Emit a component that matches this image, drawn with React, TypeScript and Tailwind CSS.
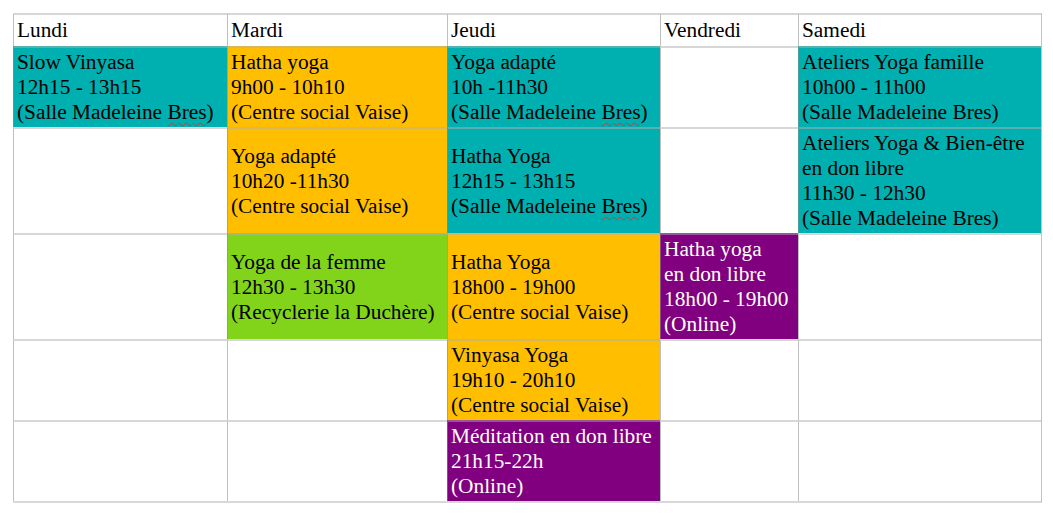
import React from "react";

type Tone = "white" | "teal" | "gold" | "lime" | "purple";

interface Cell {
  tone: Tone;
  lines: React.ReactNode[];
}

const toneClass: Record<Tone, string> = {
  white: "bg-white text-black",
  teal: "bg-[#00afaf] text-black",
  gold: "bg-[#ffbf00] text-black",
  lime: "bg-[#81d41a] text-black",
  purple: "bg-[#800080] text-white",
};

// spell-check squiggle under "Bres"
const Bres = () => (
  <span className="underline decoration-wavy decoration-[#e03030] decoration-1 underline-offset-[3px]">Bres</span>
);

const empty: Cell = { tone: "white", lines: [] };

const header: Cell[] = ["Lundi", "Mardi", "Jeudi", "Vendredi", "Samedi"].map((d) => ({ tone: "white", lines: [d] }));

const rows: Cell[][] = [
  [
    { tone: "teal", lines: ["Slow Vinyasa", "12h15 - 13h15", <>(Salle Madeleine <Bres />)</>] },
    { tone: "gold", lines: ["Hatha yoga", "9h00 - 10h10", "(Centre social Vaise)"] },
    { tone: "teal", lines: ["Yoga adapté", "10h -11h30", <>(Salle Madeleine <Bres />)</>] },
    empty,
    { tone: "teal", lines: ["Ateliers Yoga famille", "10h00 - 11h00", "(Salle Madeleine Bres)"] },
  ],
  [
    empty,
    { tone: "gold", lines: ["Yoga adapté", "10h20 -11h30", "(Centre social Vaise)"] },
    { tone: "teal", lines: ["Hatha Yoga", "12h15 - 13h15", <>(Salle Madeleine <Bres />)</>] },
    empty,
    {
      tone: "teal",
      lines: ["Ateliers Yoga & Bien-être", "en don libre", "11h30 - 12h30", "(Salle Madeleine Bres)"],
    },
  ],
  [
    empty,
    { tone: "lime", lines: ["Yoga de la femme", "12h30 - 13h30", "(Recyclerie la Duchère)"] },
    { tone: "gold", lines: ["Hatha Yoga", "18h00 - 19h00", "(Centre social Vaise)"] },
    { tone: "purple", lines: ["Hatha yoga", "en don libre", "18h00 - 19h00", "(Online)"] },
    empty,
  ],
  [
    empty,
    empty,
    { tone: "gold", lines: ["Vinyasa Yoga", "19h10 - 20h10", "(Centre social Vaise)"] },
    empty,
    empty,
  ],
  [
    empty,
    empty,
    { tone: "purple", lines: ["Méditation en don libre", "21h15-22h", "(Online)"] },
    empty,
    empty,
  ],
];

function TableCell({ cell }: { cell: Cell }) {
  return (
    <div
      className={`flex flex-col justify-center overflow-hidden whitespace-nowrap border-t-2 border-l border-t-[rgba(175,175,175,0.5)] border-l-[rgba(140,140,140,0.55)] pl-[3px] ${
        toneClass[cell.tone]
      }`}
    >
      {cell.lines.map((l, i) => (
        <div key={i}>{l}</div>
      ))}
    </div>
  );
}

export default function App() {
  const all = [header, ...rows];
  return (
    <div className="min-h-screen bg-white pl-[13px] pt-[13px]">
      <div
        className="w-fit border-r border-b-2 border-r-[#c2c2c2] border-b-[#d8d8d8] text-[21.33px] leading-[25px]"
        style={{ fontFamily: '"Liberation Serif", "Times New Roman", serif' }}
      >
        <div className="grid grid-cols-[214px_220px_213px_138px_243px] grid-rows-[33px_81px_106px_106px_81px_81px]">
          {all.map((row, r) => row.map((cell, c) => <TableCell key={`${r}-${c}`} cell={cell} />))}
        </div>
      </div>
    </div>
  );
}
